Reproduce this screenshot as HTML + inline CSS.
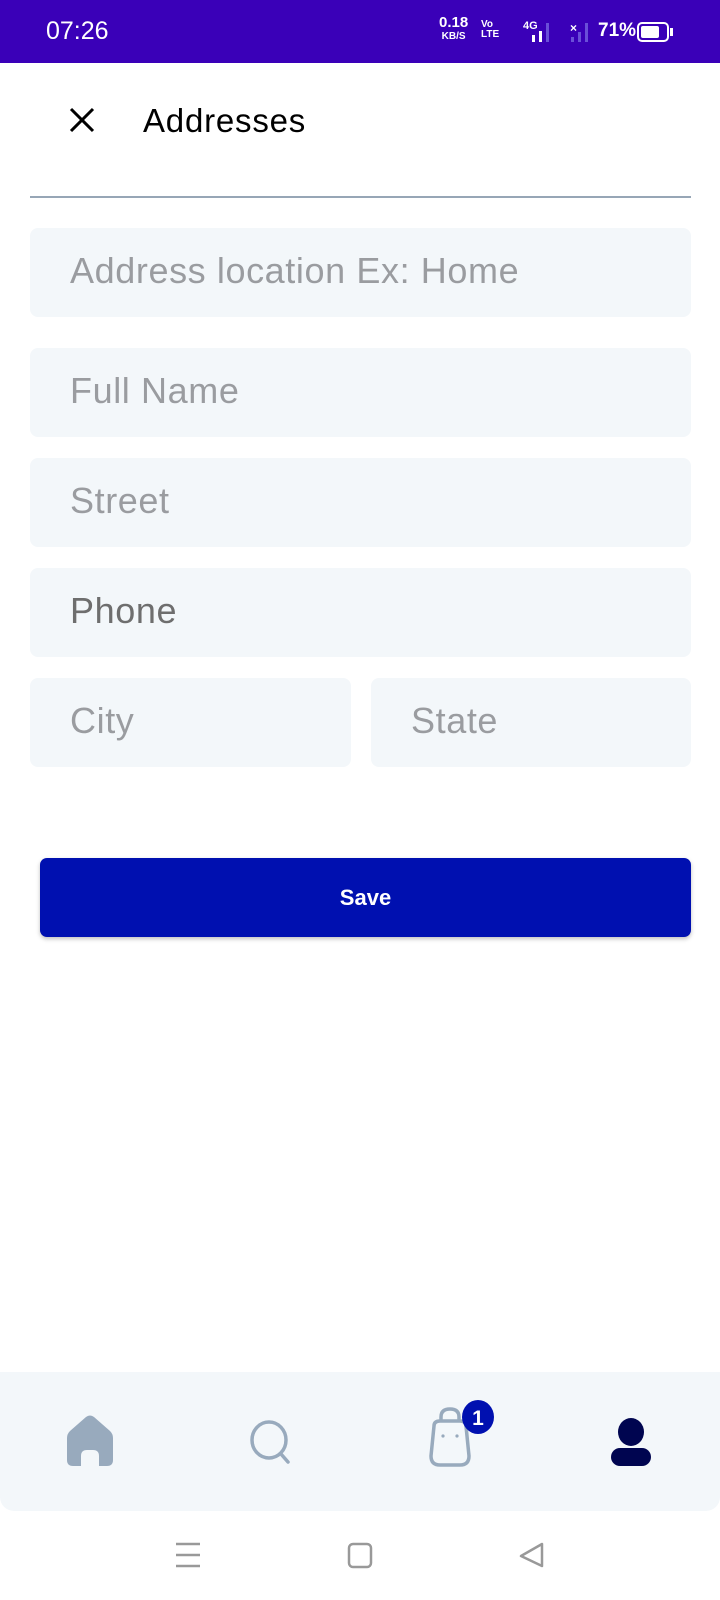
<!DOCTYPE html>
<html><head><meta charset="utf-8"><style>
*{margin:0;padding:0;box-sizing:border-box}
body{width:720px;height:1600px;background:#fff;font-family:"Liberation Sans",sans-serif;position:relative;overflow:hidden}
.abs{position:absolute}
.sb{left:0;top:0;width:720px;height:63px;background:#3a00b8;color:#fff}
.field{position:absolute;background:#f3f7fa;border-radius:8px;height:89px;color:#9a9ca0;font-size:36px;letter-spacing:0.6px;padding-left:40px;line-height:86px}
</style></head><body>
<div class="abs sb">
 <div class="abs" style="left:46px;top:17px;font-size:25px">07:26</div>
 <div class="abs" style="left:439px;top:17px;font-size:15px;font-weight:bold;line-height:12px;text-align:center">0.18<br><span style="font-size:10px">KB/S</span></div>
 <div class="abs" style="left:481px;top:20px;font-size:10px;font-weight:bold;line-height:10px">Vo<br>LTE</div>
 <div class="abs" style="left:523px;top:20px;font-size:11px;font-weight:bold">4G</div>
 <svg class="abs" style="left:525px;top:20px" width="120" height="24">
  <rect x="7" y="15" width="3" height="7" fill="#fff"/><rect x="14" y="11" width="3" height="11" fill="#fff"/><rect x="21" y="3" width="3" height="19" fill="#6a4fd8"/>
  <text x="45" y="12" font-size="12" fill="#fff" font-family="Liberation Sans" font-weight="bold">×</text>
  <rect x="46" y="17" width="3" height="5" fill="#6a4fd8"/><rect x="53" y="12" width="3" height="10" fill="#6a4fd8"/><rect x="60" y="3" width="3" height="19" fill="#6a4fd8"/>
 </svg>
 <div class="abs" style="left:598px;top:20px;font-size:19px;font-weight:bold">71%</div>
 <div class="abs" style="left:637px;top:22px;width:32px;height:20px;border:2px solid #fff;border-radius:5px"><div style="margin:2px;width:18px;height:12px;background:#fff;border-radius:2px"></div></div>
 <div class="abs" style="left:670px;top:28px;width:3px;height:8px;background:#fff"></div>
</div>
<svg class="abs" style="left:68px;top:106px" width="28" height="28"><path d="M3 3L25 25M25 3L3 25" stroke="#000" stroke-width="3"/></svg>
<div class="abs" style="left:143px;top:102px;font-size:33px;color:#000;letter-spacing:0.8px">Addresses</div>
<div class="abs" style="left:30px;top:196px;width:661px;height:2px;background:#97a6b6"></div>
<div class="field" style="left:30px;top:228px;width:661px">Address location Ex: Home</div>
<div class="field" style="left:30px;top:348px;width:661px">Full Name</div>
<div class="field" style="left:30px;top:458px;width:661px">Street</div>
<div class="field" style="left:30px;top:568px;width:661px;color:#6e6e6e">Phone</div>
<div class="field" style="left:30px;top:678px;width:321px">City</div>
<div class="field" style="left:371px;top:678px;width:320px">State</div>
<div class="abs" style="left:40px;top:858px;width:651px;height:79px;background:#0010b0;border-radius:7px;color:#fff;font-weight:bold;font-size:22px;text-align:center;line-height:79px;box-shadow:0 2px 4px rgba(0,0,0,0.25)">Save</div>
<div class="abs" style="left:0;top:1372px;width:720px;height:139px;background:#f3f7fa;border-radius:0 0 14px 14px"></div>
<svg class="abs" style="left:0;top:1372px" width="720" height="139">
 <path d="M67 66Q67 62 70 59L86 45Q90 42 94 45L110 59Q113 62 113 66V88Q113 94 107 94H99V84Q99 78 93 78H87Q81 78 81 84V94H73Q67 94 67 88Z" fill="#98aabd"/>
 <ellipse cx="269" cy="68" rx="17" ry="18" fill="none" stroke="#98aabd" stroke-width="3.5"/>
 <path d="M281 82L288 90" stroke="#98aabd" stroke-width="3.5" stroke-linecap="round"/>
 <path d="M434 54Q434 49 440 49H460Q466 49 466 54L469 84Q469 93 460 93H440Q431 93 431 84Z" fill="none" stroke="#98aabd" stroke-width="3.5"/>
 <path d="M441 49V45Q441 37 450 37Q459 37 459 45V49" fill="none" stroke="#98aabd" stroke-width="3.5"/>
 <circle cx="443" cy="64" r="1.6" fill="#98aabd"/><circle cx="457" cy="64" r="1.6" fill="#98aabd"/>
 <ellipse cx="478" cy="45" rx="16" ry="17" fill="#0010b0"/>
 <text x="478" y="53" font-size="21" font-weight="bold" fill="#fff" text-anchor="middle" font-family="Liberation Sans">1</text>
 <ellipse cx="631" cy="60" rx="13" ry="14" fill="#000550"/>
 <rect x="611" y="76" width="40" height="18" rx="9" fill="#000550"/>
</svg>
<svg class="abs" style="left:0;top:1530px" width="720" height="50">
 <path d="M176 14H200M176 25H200M176 36H200" stroke="#999" stroke-width="2.5"/>
 <rect x="349" y="14" width="22" height="23" rx="4" fill="none" stroke="#999" stroke-width="2.5"/>
 <path d="M542 14V36L521 26Z" fill="none" stroke="#999" stroke-width="2.5" stroke-linejoin="round"/>
</svg>
</body></html>
